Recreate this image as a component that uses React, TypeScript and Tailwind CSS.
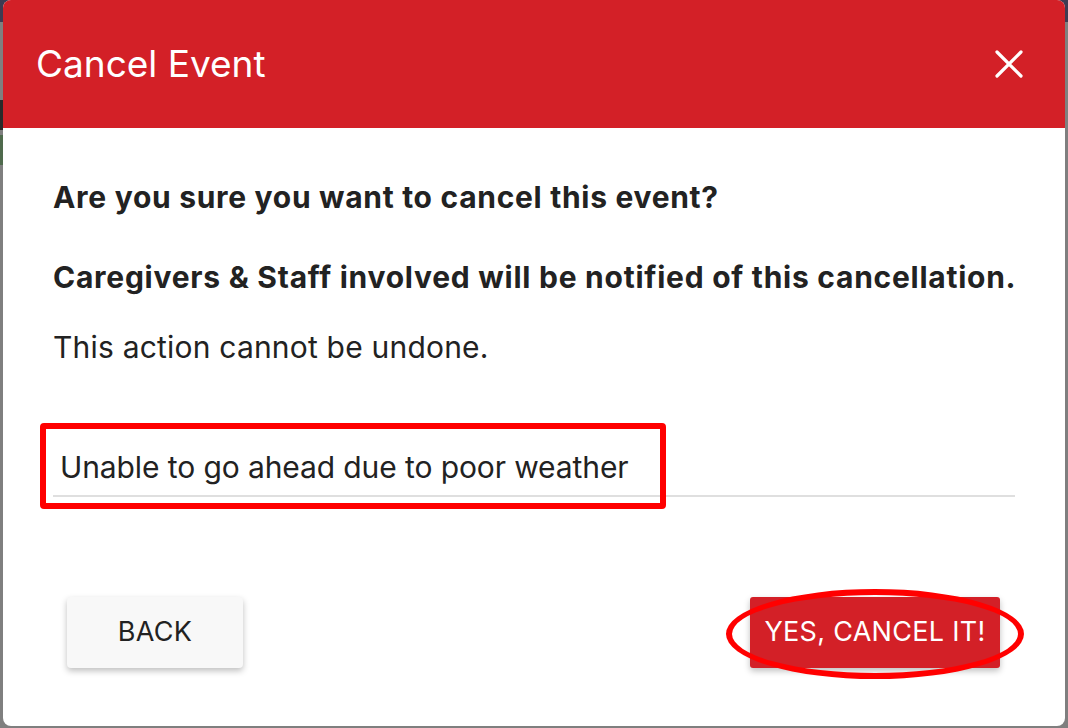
import React from 'react'

function CloseIcon() {
  return (
    <svg width="30" height="30" viewBox="0 0 30 30" fill="none">
      <path d="M3 3L27 27M27 3L3 27" stroke="white" strokeWidth="3.2" strokeLinecap="round" />
    </svg>
  )
}

export default function App() {
  return (
    <div className="relative w-[1068px] h-[728px] overflow-hidden bg-[#7f7f7f] font-['Inter','Liberation_Sans',sans-serif]">
      {/* peeking page behind the modal */}
      <div className="absolute left-0 top-0 w-full h-[22px] bg-[#3e3b52]" />
      <div className="absolute left-0 top-[100px] w-[3px] h-[30px] bg-[#2a2a2a]" />
      <div className="absolute left-0 top-[135px] w-[3px] h-[30px] bg-[#4f6a4d]" />

      <div className="relative ml-[3px] w-[1062px] h-[726px] bg-white rounded-[8px] overflow-hidden flex flex-col">
        <div className="h-[128px] bg-[#d32027] flex items-center justify-between pl-[33px] pr-[41px]">
          <h2 className="text-[37px] text-white font-normal">Cancel Event</h2>
          <button className="w-[30px] h-[30px] flex items-center justify-center">
            <CloseIcon />
          </button>
        </div>

        <div className="flex-1 flex flex-col px-[50px] text-[#222]">
          <p className="mt-[51px] text-[30px] font-bold leading-[36px] tracking-[0.7px] whitespace-nowrap">
            Are you sure you want to cancel this event?
          </p>
          <p className="mt-[44px] text-[30px] font-bold leading-[36px] tracking-[0.74px] whitespace-nowrap">
            Caregivers &amp; Staff involved will be notified of this cancellation.
          </p>
          <p className="mt-[34px] text-[30px] leading-[36px] tracking-[0.2px]">This action cannot be undone.</p>

          <div className="relative mt-[84px]">
            <div className="pl-[7px] pb-[10px] border-b-2 border-[#dfdfdf] text-[30px] leading-[36px] tracking-[-0.1px]">
              Unable to go ahead due to poor weather
            </div>
            <div className="absolute left-[-13px] top-[-26px] w-[626px] h-[86px] border-[6px] border-[#ff0000] rounded-[4px]" />
          </div>

          <div className="mt-[100px] flex items-center justify-between pl-[14px] pr-[15px]">
            <button className="w-[176px] h-[71px] rounded-[4px] bg-[#f8f8f8] shadow-[0_3px_6px_rgba(0,0,0,0.25)] text-[27px] text-[#222] tracking-[0.3px]">
              BACK
            </button>
            <div className="relative">
              <button className="w-[250px] h-[71px] rounded-[3px] bg-[#d32027] shadow-[0_3px_6px_rgba(0,0,0,0.25)] text-[27px] text-white tracking-[0.3px]">
                YES, CANCEL IT!
              </button>
              <div className="absolute left-[-24px] top-[-8px] w-[298px] h-[90px] rounded-[50%] border-[6px] border-[#ff0000]" />
            </div>
          </div>
        </div>
      </div>
    </div>
  )
}
